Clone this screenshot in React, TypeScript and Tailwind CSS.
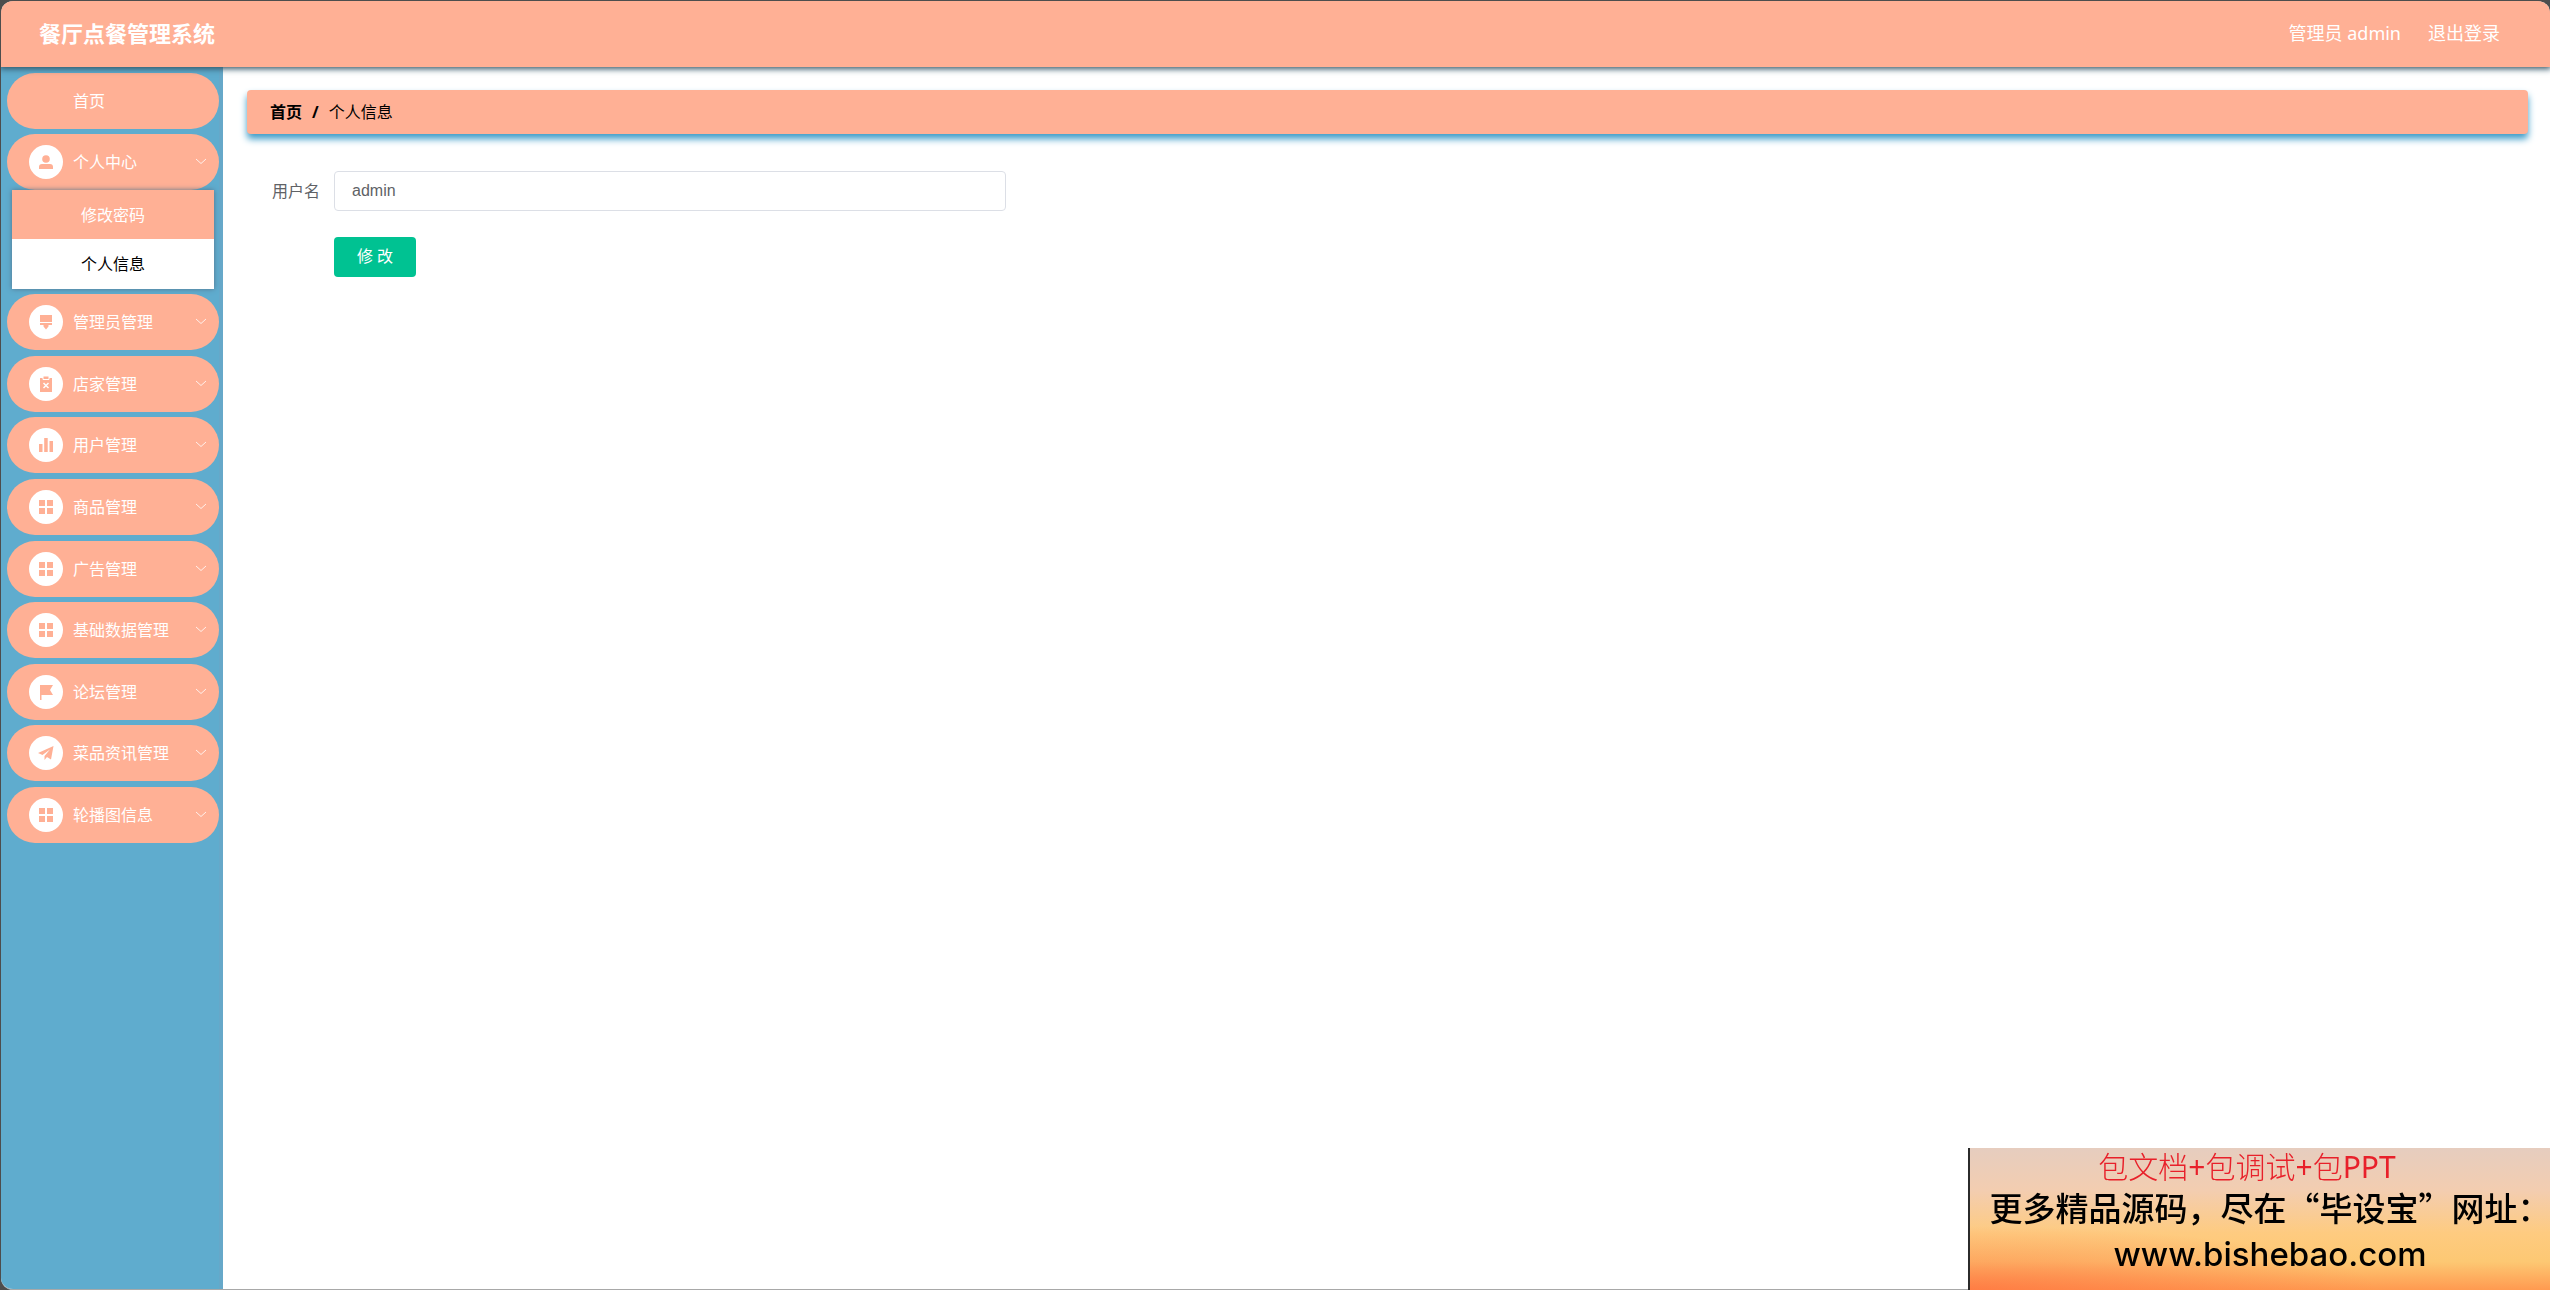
import React from "react";

const paths: Record<string, React.ReactNode> = {
  user: (
    <>
      <circle cx="8" cy="5" r="3.8" />
      <path d="M1 15v-2a3 3 0 0 1 3-3h8a3 3 0 0 1 3 3v2z" />
    </>
  ),
  brush: <path d="M2 1h12v7H2zM2 9h12v2h-3.500v1.500L8 15.500 5.500 12.500V11H2z" />,
  clipboard: (
    <>
      <path d="M2 2h12v14H2z" />
      <path d="M5 0h6v3.500H5z" stroke="white" />
      <path d="M5.500 7l5 5M10.500 7l-5 5" stroke="white" strokeWidth="1.500" />
    </>
  ),
  chart: <path d="M1 7h3.500v8H1zM6.200 1h3.500v14H6.200zM11.500 4H15v11h-3.500z" />,
  grid: <path d="M1 1h6v6H1zM9 1h6v6H9zM1 9h6v6H1zM9 9h6v6H9z" />,
  flag: <path d="M2 1h13l-3 5 3 5H3.500v5H2z" />,
  plane: <path d="M15.500 1L0 8l4.500 2L12 4.500 6.500 11v4l2.500-3 4 2.500z" />,
};

function Glyph({ name }: { name: string }) {
  return (
    <span className="flex size-[34px] shrink-0 items-center justify-center rounded-full bg-white">
      <svg viewBox="0 0 16 16" className="size-4 fill-[#ffb095]" aria-hidden="true">
        {paths[name]}
      </svg>
    </span>
  );
}

function MenuButton({ icon, label, open = false }: { icon: string; label: string; open?: boolean }) {
  return (
    <button
      type="button"
      aria-expanded={open}
      className="flex h-14 w-full shrink-0 items-center rounded-full bg-[#ffb095] pr-3 pl-[22px] text-left text-white"
    >
      <Glyph name={icon} />
      <span className="ml-[10px] flex-1 whitespace-nowrap">{label}</span>
      <svg viewBox="0 0 12 12" className="size-3 fill-none stroke-white/80" aria-hidden="true">
        <path d="M1 3l5 4.500 5-4.500" />
      </svg>
    </button>
  );
}

const sections = [
  { icon: "brush", label: "管理员管理" },
  { icon: "clipboard", label: "店家管理" },
  { icon: "chart", label: "用户管理" },
  { icon: "grid", label: "商品管理" },
  { icon: "grid", label: "广告管理" },
  { icon: "grid", label: "基础数据管理" },
  { icon: "flag", label: "论坛管理" },
  { icon: "plane", label: "菜品资讯管理" },
  { icon: "grid", label: "轮播图信息" },
];

export default function App() {
  return (
    <div className="min-h-screen bg-[#4d4d4d] pt-px pl-px font-['Noto_Sans','Noto_Sans_CJK_SC',sans-serif] text-base">
      <div className="flex min-h-[calc(100vh-1px)] flex-col overflow-hidden rounded-xl rounded-br-none border-b border-[#a8a8a8] bg-white">
        <header className="z-10 flex h-[66px] shrink-0 items-center justify-between bg-[#ffb095] pr-[50px] pb-0.5 pl-[38px] text-white shadow-[0_1px_6px_1px_#335566]">
          <h1 className="text-[22px] font-bold">餐厅点餐管理系统</h1>
          <div className="flex items-center gap-[27px] text-lg">
            <span>管理员 admin</span>
            <a href="#logout">退出登录</a>
          </div>
        </header>

        <div className="flex flex-1">
          <nav className="w-[222px] shrink-0 border-r-4 border-[#66a8c9] bg-[#5facce] pt-1.5 pl-1.5">
            <a
              href="#home"
              className="flex h-14 items-center rounded-full bg-[#ffb095] pl-[66px] text-white"
            >
              首页
            </a>
            <div className="mt-[5px]">
              <MenuButton icon="user" label="个人中心" open />
              <div className="mx-[5px] flex flex-col text-center shadow-[0_0_5px_#55738a]">
                <a href="#password" className="flex h-[49px] items-center justify-center bg-[#ffb095] text-white">
                  修改密码
                </a>
                <a href="#profile" className="flex h-[50px] items-center justify-center bg-white text-black">
                  个人信息
                </a>
              </div>
            </div>
            <div className="mt-[5px] flex min-h-[549px] flex-col justify-between">
              {sections.map((s) => (
                <MenuButton key={s.label} icon={s.icon} label={s.label} />
              ))}
            </div>
          </nav>

          <main className="min-w-0 flex-1 pt-[23px] pr-[22px] pl-6">
            <nav
              aria-label="breadcrumb"
              className="flex h-11 items-center rounded-sm bg-[#ffb095] pl-[23px] text-black shadow-[0_5px_7px_#3d9cc8]"
            >
              <a href="#home" className="font-bold">首页</a>
              <span className="mx-[10px] font-bold">/</span>
              <span>个人信息</span>
            </nav>
            <form className="mt-[37px] pl-[25px]" onSubmit={(e) => e.preventDefault()}>
              <div className="flex items-center">
                <label htmlFor="username" className="w-[62px] text-[#606266]">
                  用户名
                </label>
                <input
                  id="username"
                  defaultValue="admin"
                  className="h-10 w-[672px] rounded border border-[#dcdfe6] bg-white px-[17px] font-['Liberation_Sans',sans-serif] text-[#606266]"
                />
              </div>
              <button
                type="submit"
                className="mt-[26px] ml-[62px] h-10 w-[82px] rounded bg-[#00c292] pb-0.5 text-white"
              >
                修 改
              </button>
            </form>
          </main>
        </div>
      </div>

      <aside className="fixed right-0 bottom-0 z-20 flex h-[142px] w-[582px] flex-col items-center border-l-2 border-[#2b2b2b] bg-[radial-gradient(70%_45%_at_bottom_left,#ff6a3c99,transparent),linear-gradient(to_bottom,#e6cdbf,#f3cdb0_30%,#fecb80_60%,#fdc873_80%,#ff9a50)] text-black">
        <p className="mr-[26px] h-[38px] text-[30px] leading-[38px] font-light text-[#e8202a]">
          包文档<span className="font-normal">+</span>包调试<span className="font-normal">+</span>包
          <span className="font-normal">PPT</span>
        </p>
        <p className="ml-5 h-[43px] font-['Noto_Sans_CJK_SC',sans-serif] text-[33px] leading-[43px] font-medium whitespace-nowrap">
          更多精品源码，尽在“毕设宝”网址：
        </p>
        <p className="ml-5 font-['Inter',sans-serif] text-[33px] leading-[50px] font-medium">www.bishebao.com</p>
      </aside>
    </div>
  );
}
